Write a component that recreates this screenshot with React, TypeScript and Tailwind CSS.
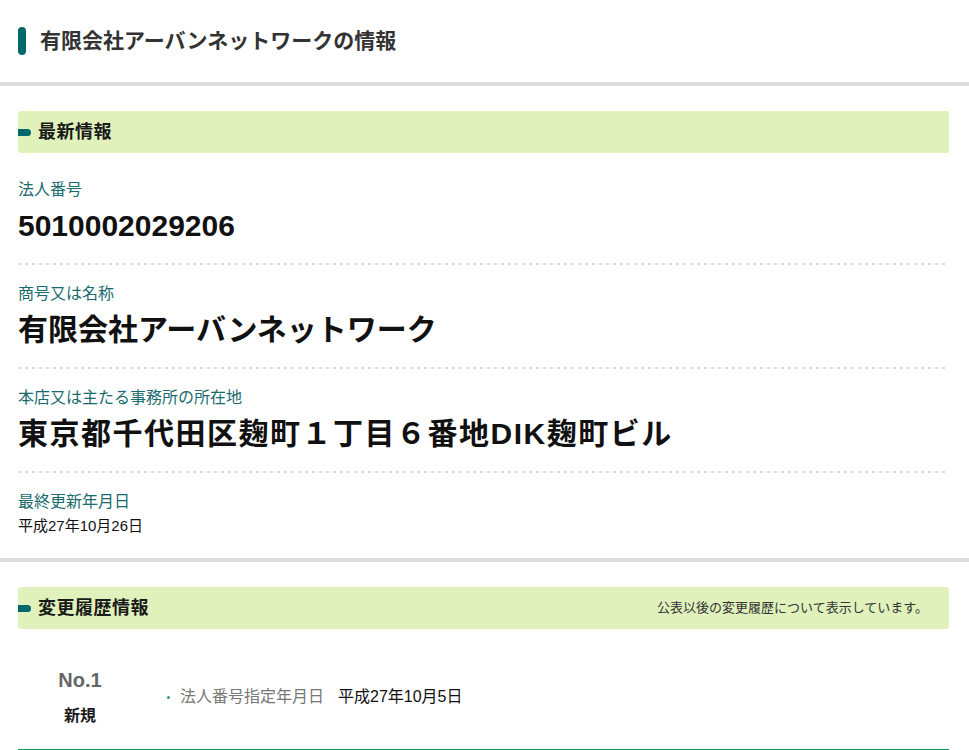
const FIELDS: { label: string; value: string; kind: 'big' | 'address' | 'small' }[] = [
  { label: '法人番号', value: '5010002029206', kind: 'big' },
  { label: '商号又は名称', value: '有限会社アーバンネットワーク', kind: 'big' },
  { label: '本店又は主たる事務所の所在地', value: '東京都千代田区麹町１丁目６番地DIK麹町ビル', kind: 'address' },
  { label: '最終更新年月日', value: '平成27年10月26日', kind: 'small' },
];

function SectionHeading({ title, note }: { title: string; note?: string }) {
  return (
    <div className="h-[42px] rounded-[3px] bg-[#e0f1bb] flex items-center pr-[21px]">
      <span className="w-[13px] h-[7px] rounded-r-full bg-[#00686b] shrink-0" />
      <h2 className="ml-[7px] text-[18px] font-bold text-[#1a1a1a] tracking-[0.5px]">{title}</h2>
      {note && <p className="ml-auto text-[13px] text-[#333]">{note}</p>}
    </div>
  );
}

function Dots() {
  return (
    <div className="h-[2px] bg-[linear-gradient(to_right,#dcdcdc_3px,transparent_3px)] bg-[length:7px_2px]" />
  );
}

export default function App() {
  return (
    <div className="min-h-screen bg-white text-[#111] font-['Liberation_Sans','Noto_Sans_CJK_JP',sans-serif]">
      {/* Page title */}
      <header className="h-[82px] flex items-center px-[18px]">
        <span className="w-[8px] h-[28px] rounded-full bg-[#00686b]" />
        <h1 className="ml-[14px] text-[21px] font-bold text-[#333]">有限会社アーバンネットワークの情報</h1>
      </header>
      <div className="h-[4px] bg-[#dddddd]" />

      {/* Latest info */}
      <section className="pl-[18px] pr-[20px] pt-[25px] pb-[21px]">
        <SectionHeading title="最新情報" />
        <div className="mt-[8px]">
          {FIELDS.map((f, i) => (
            <div key={f.label}>
              {i > 0 && <Dots />}
              <div className={`pt-[17px] ${f.kind === 'small' ? '' : 'pb-[17px]'}`}>
                <p className="text-[16px] leading-[24px] text-[#1a6b6e]">{f.label}</p>
                {f.kind === 'small' ? (
                  <p className="mt-[1px] text-[15px] leading-[22px] text-[#111]">{f.value}</p>
                ) : (
                  <p
                    className={`mt-[4px] text-[30px] leading-[40px] font-bold text-[#111] whitespace-nowrap ${
                      f.kind === 'address' ? 'tracking-[1.5px]' : ''
                    }`}
                  >
                    {f.value}
                  </p>
                )}
              </div>
            </div>
          ))}
        </div>
      </section>
      <div className="h-[4px] bg-[#dddddd]" />

      {/* Change history */}
      <section className="pl-[18px] pr-[20px] pt-[25px]">
        <SectionHeading title="変更履歴情報" note="公表以後の変更履歴について表示しています。" />
        <div className="flex items-center pt-[37px] pb-[21px] border-b border-[#11955a]">
          <div className="w-[124px] flex flex-col items-center">
            <span className="text-[20px] leading-[28px] font-bold text-[#666]">No.1</span>
            <span className="mt-[10px] text-[16px] leading-[24px] font-bold text-[#1a1a1a]">新規</span>
          </div>
          <ul className="ml-[25px]">
            <li className="flex items-center text-[16px] leading-[24px]">
              <span className="w-[3px] h-[3px] bg-[#2aa070] rounded-full" />
              <span className="ml-[10px] text-[#777]">法人番号指定年月日</span>
              <span className="ml-[14px] text-[#111]">平成27年10月5日</span>
            </li>
          </ul>
        </div>
      </section>
    </div>
  );
}
